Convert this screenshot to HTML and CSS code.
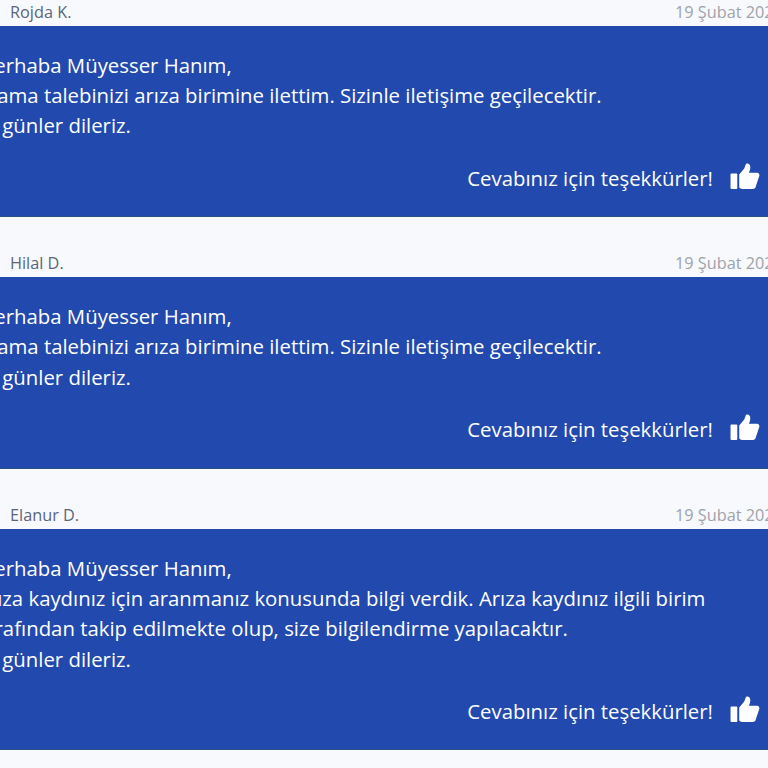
FILE: index.html
```html
<!DOCTYPE html>
<html lang="tr">
<head>
<meta charset="utf-8">
<title>Yorumlar</title>
<link rel="stylesheet" href="styles.css">
</head>
<body>
<main class="list">
  <article class="reply">
    <header class="meta"><span class="name">Rojda K.</span><span class="date">19 Şubat 2024</span></header>
    <div class="bubble">
      <p class="message">Merhaba Müyesser Hanım,<br>Arama talebinizi arıza birimine ilettim. Sizinle iletişime geçilecektir.<br>İyi günler dileriz.</p>
      <div class="thanks"><span>Cevabınız için teşekkürler!</span>
        <svg class="thumb" viewBox="0 0 30 28"><rect x="0" y="11" width="7" height="16" rx="1"/><path d="M9 12 L14 6 C15 4 15.500 2 16 1 C18 0 20.500 1 20.500 4.500 C20.500 6.500 20 8 19 10 L27.500 10 C29.500 10 30.300 12 29.800 13.500 L26 25 C25.500 26.500 24.500 27 23 27 L12 27 C10.500 27 9 26 9 25 Z"/></svg>
      </div>
    </div>
  </article>
  <article class="reply">
    <header class="meta"><span class="name">Hilal D.</span><span class="date">19 Şubat 2024</span></header>
    <div class="bubble">
      <p class="message">Merhaba Müyesser Hanım,<br>Arama talebinizi arıza birimine ilettim. Sizinle iletişime geçilecektir.<br>İyi günler dileriz.</p>
      <div class="thanks"><span>Cevabınız için teşekkürler!</span>
        <svg class="thumb" viewBox="0 0 30 28"><rect x="0" y="11" width="7" height="16" rx="1"/><path d="M9 12 L14 6 C15 4 15.500 2 16 1 C18 0 20.500 1 20.500 4.500 C20.500 6.500 20 8 19 10 L27.500 10 C29.500 10 30.300 12 29.800 13.500 L26 25 C25.500 26.500 24.500 27 23 27 L12 27 C10.500 27 9 26 9 25 Z"/></svg>
      </div>
    </div>
  </article>
  <article class="reply">
    <header class="meta"><span class="name">Elanur D.</span><span class="date">19 Şubat 2024</span></header>
    <div class="bubble">
      <p class="message">Merhaba Müyesser Hanım,<br>Arıza kaydınız için aranmanız konusunda bilgi verdik. Arıza kaydınız ilgili birim<br>tarafından takip edilmekte olup, size bilgilendirme yapılacaktır.<br>İyi günler dileriz.</p>
      <div class="thanks"><span>Cevabınız için teşekkürler!</span>
        <svg class="thumb" viewBox="0 0 30 28"><rect x="0" y="11" width="7" height="16" rx="1"/><path d="M9 12 L14 6 C15 4 15.500 2 16 1 C18 0 20.500 1 20.500 4.500 C20.500 6.500 20 8 19 10 L27.500 10 C29.500 10 30.300 12 29.800 13.500 L26 25 C25.500 26.500 24.500 27 23 27 L12 27 C10.500 27 9 26 9 25 Z"/></svg>
      </div>
    </div>
  </article>
</main>
</body>
</html>
```
FILE: styles.css
```css
html, body { margin: 0; height: 768px; overflow: hidden; background: #f8f9fd; }
body { font-family: "Open Sans", "Liberation Sans", sans-serif; }
.list { width: 822px; margin-left: -34px; margin-top: -34.300px; display: flex; flex-direction: column; }
.meta { display: flex; justify-content: space-between; height: 60px; align-items: flex-end; padding: 0 5px 4.100px 44px; box-sizing: border-box; font-size: 16.300px; line-height: 20px; }
.name { color: #5a6579; }
.date { color: #9ea3ab; }
.bubble { background: #2249ae; color: #fff; padding: 24px 0 22.600px; border-bottom: 1px solid #2c5183; }
.message { margin: 0; padding-left: 10px; font-size: 20.350px; line-height: 30.300px; }
.thanks { display: flex; justify-content: flex-end; align-items: center; gap: 17px; margin-top: 22px; padding-right: 28px; font-size: 20.350px; line-height: 31px; }
.thumb { width: 30px; height: 27px; margin-bottom: 4px; fill: #fff; }
```
